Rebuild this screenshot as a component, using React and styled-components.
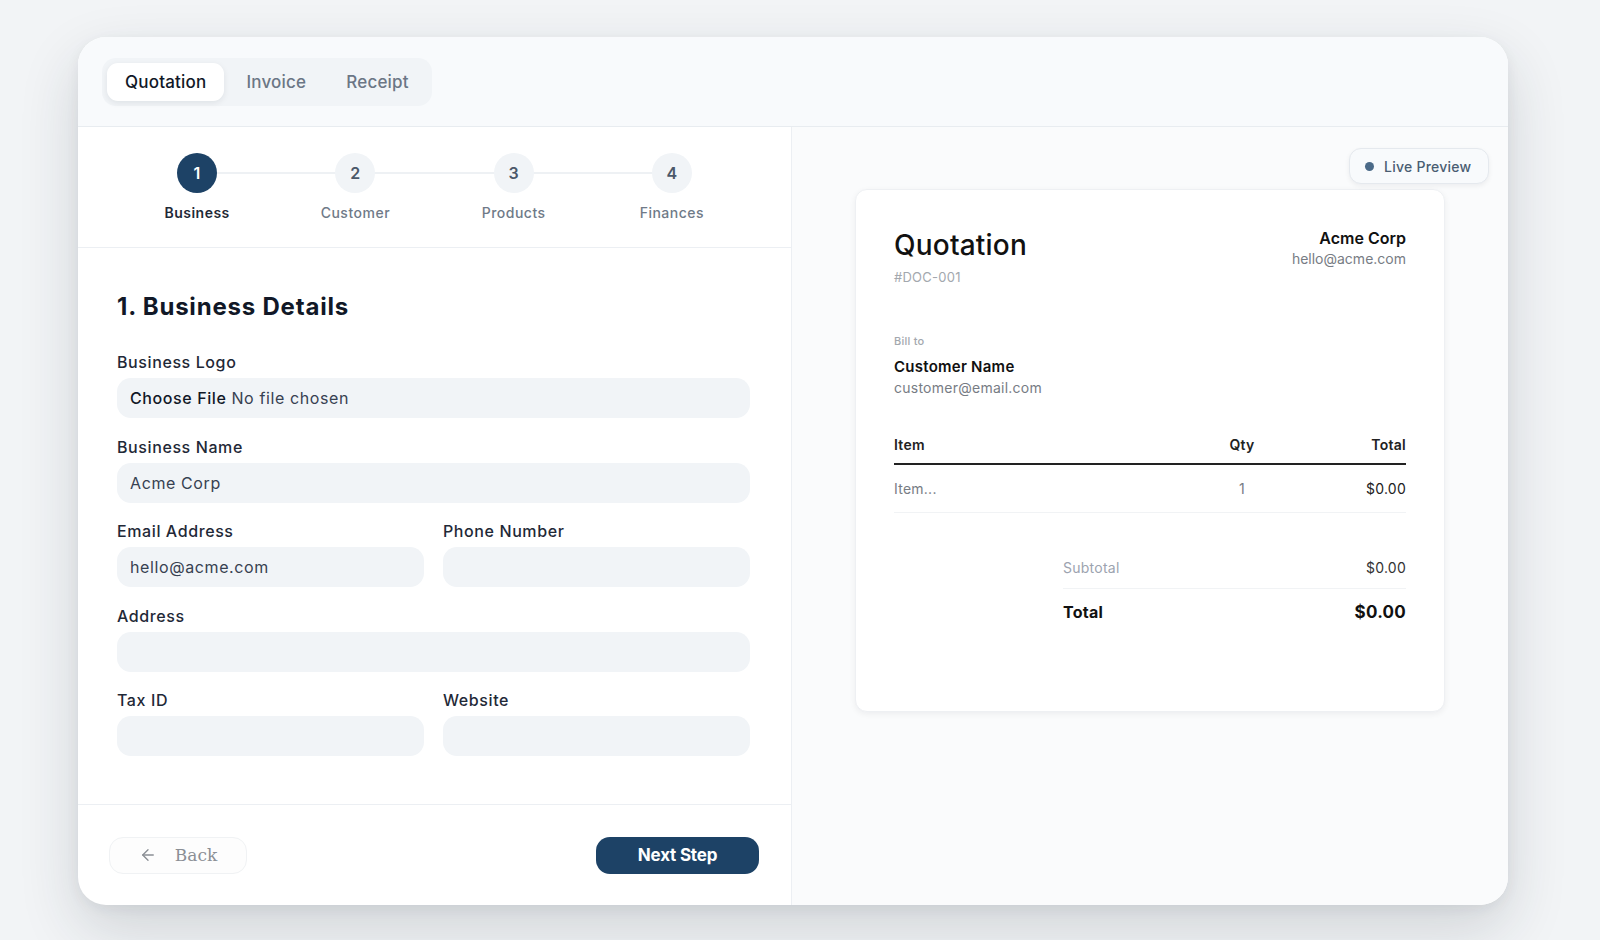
import React from "react";
import styled, { createGlobalStyle } from "styled-components";
import { ArrowLeft } from "lucide-react";

const GlobalStyle = createGlobalStyle`
    * { box-sizing: border-box; }
    body {
        margin: 0;
        background: #f2f4f6;
        font-family: Inter, "Noto Sans", sans-serif;
        letter-spacing: 0.25px;
        color: #111827;
    }
`;

const Page = styled.div`
    min-height: 940px;
    padding: 37px 0 0 78px;
`;

const Card = styled.div`
    width: 1430px;
    height: 868px;
    background: #fff;
    border-radius: 28px;
    box-shadow: 0 24px 60px rgba(30, 41, 59, 0.16), 0 4px 14px rgba(30, 41, 59, 0.06);
    display: flex;
    flex-direction: column;
    overflow: hidden;
`;

const Header = styled.div`
    height: 90px;
    flex-shrink: 0;
    background: #f8fafc;
    border-bottom: 1px solid #e8ecf0;
    display: flex;
    align-items: center;
    padding: 0 24px;
`;

const Tabs = styled.div`
    display: flex;
    gap: 4px;
    padding: 5px;
    background: #f1f4f7;
    border-radius: 14px;
`;

const Tab = styled.button`
    height: 38px;
    padding: 0 18px;
    border: none;
    border-radius: 11px;
    font-family: inherit;
    font-size: 17px;
    font-weight: 500;
    letter-spacing: 0.2px;
    cursor: pointer;
    background: ${(p) => (p.$active ? "#fff" : "transparent")};
    color: ${(p) => (p.$active ? "#111827" : "#6b7685")};
    box-shadow: ${(p) => (p.$active ? "0 2px 6px rgba(15, 23, 42, 0.08)" : "none")};
`;

const Body = styled.div`
    flex: 1;
    display: flex;
    min-height: 0;
`;

const LeftPanel = styled.div`
    width: 714px;
    flex-shrink: 0;
    border-right: 1px solid #eceff3;
    display: flex;
    flex-direction: column;
`;

const Stepper = styled.div`
    display: grid;
    grid-template-columns: repeat(4, 1fr);
    padding: 26px 40px 0;
    height: 121px;
    border-bottom: 1px solid #eceff3;
`;

const Step = styled.div`
    position: relative;
    display: flex;
    flex-direction: column;
    align-items: center;
    gap: 11px;
    &:not(:first-child)::before {
        content: "";
        position: absolute;
        top: 19px;
        left: -50%;
        right: 50%;
        height: 2px;
        background: #eef1f4;
    }
`;

const StepCircle = styled.div`
    position: relative;
    z-index: 1;
    width: 40px;
    height: 40px;
    border-radius: 50%;
    display: flex;
    align-items: center;
    justify-content: center;
    font-size: 16px;
    font-weight: 600;
    background: ${(p) => (p.$active ? "#1d4266" : "#f1f4f7")};
    color: ${(p) => (p.$active ? "#fff" : "#4b5869")};
`;

const StepLabel = styled.div`
    font-size: 14px;
    letter-spacing: 0.5px;
    font-weight: ${(p) => (p.$active ? 600 : 500)};
    color: ${(p) => (p.$active ? "#1f2937" : "#6f7a88")};
`;

const Form = styled.div`
    flex: 1;
    padding: 43px 41px 0 39px;
`;

const Heading = styled.h2`
    margin: 0 0 29px;
    font-size: 24px;
    line-height: 32px;
    font-weight: 700;
    letter-spacing: 0.8px;
    color: #111827;
`;

const Fields = styled.div`
    display: grid;
    grid-template-columns: 1fr 1fr;
    column-gap: 19px;
    row-gap: 18.5px;
`;

const Field = styled.div`
    grid-column: ${(p) => (p.$wide ? "1 / -1" : "auto")};
    display: flex;
    flex-direction: column;
    gap: 6px;
`;

const Label = styled.label`
    font-size: 16px;
    line-height: 20px;
    font-weight: 500;
    letter-spacing: 0.6px;
    color: #1f2937;
`;

const Input = styled.input`
    height: 40px;
    border: none;
    outline: none;
    border-radius: 14px;
    background: #f1f4f7;
    padding: 0 13px;
    font-family: inherit;
    font-size: 16px;
    letter-spacing: 0.6px;
    color: #374151;
`;

const FileBox = styled.div`
    height: 40px;
    border-radius: 14px;
    background: #f1f4f7;
    padding: 0 13px;
    display: flex;
    align-items: center;
    gap: 5px;
    font-size: 16px;
    letter-spacing: 0.6px;
    color: #374151;
    span {
        color: #111827;
        font-weight: 500;
    }
`;

const Footer = styled.div`
    height: 101px;
    flex-shrink: 0;
    border-top: 1px solid #eceff3;
    display: flex;
    align-items: center;
    justify-content: space-between;
    padding: 0 32px 0 31px;
`;

const BackButton = styled.button`
    width: 138px;
    height: 37px;
    display: flex;
    align-items: center;
    justify-content: center;
    gap: 18px;
    border: 1px solid #f0f2f4;
    border-radius: 14px;
    background: #fdfdfd;
    color: #8b8f95;
    font-family: "DejaVu Serif", serif;
    font-size: 17px;
    letter-spacing: 0;
`;

const NextButton = styled.button`
    width: 163px;
    height: 37px;
    border: none;
    border-radius: 14px;
    background: #1d4266;
    color: #fff;
    font-family: inherit;
    font-size: 17px;
    font-weight: 700;
    letter-spacing: -0.2px;
`;

const RightPanel = styled.div`
    position: relative;
    flex: 1;
    background: #fafbfc;
    padding: 62px 0 0;
    display: flex;
    justify-content: center;
    align-items: flex-start;
`;

const LiveBadge = styled.div`
    position: absolute;
    top: 21px;
    right: 19px;
    height: 36px;
    width: 140px;
    display: flex;
    align-items: center;
    gap: 10px;
    padding: 0 15px;
    border: 1px solid #e5e9ee;
    border-radius: 12px;
    background: #f8fafc;
    box-shadow: 0 2px 5px rgba(15, 23, 42, 0.06);
    font-size: 14px;
    font-weight: 500;
    color: #4a5d72;
`;

const Dot = styled.span`
    width: 9px;
    height: 9px;
    border-radius: 50%;
    background: #4b6a88;
`;

const Doc = styled.div`
    width: 590px;
    height: 523px;
    background: #fff;
    border: 1px solid #eef0f3;
    border-radius: 12px;
    box-shadow: 0 2px 6px rgba(15, 23, 42, 0.06);
    padding: 38px;
`;

const DocTop = styled.div`
    display: flex;
    justify-content: space-between;
    align-items: flex-start;
`;

const DocTitle = styled.div`
    font-size: 28px;
    line-height: 34px;
    font-weight: 500;
    letter-spacing: 0.2px;
    color: #111;
`;

const DocNumber = styled.div`
    margin-top: 7px;
    font-size: 13px;
    line-height: 16px;
    color: #a3a8ae;
`;

const Company = styled.div`
    text-align: right;
    display: flex;
    flex-direction: column;
    gap: 2px;
    letter-spacing: 0;
`;

const Strong = styled.div`
    font-size: ${(p) => p.$size || 16}px;
    line-height: 20px;
    font-weight: 600;
    color: #111;
`;

const Muted = styled.div`
    font-size: 14px;
    line-height: 18px;
    color: #777c84;
`;

const BillTo = styled.div`
    margin-top: 49px;
    display: flex;
    flex-direction: column;
    gap: 2px;
`;

const SmallLabel = styled.div`
    font-size: 11px;
    line-height: 14px;
    font-weight: 500;
    color: #a3a8ae;
    margin-bottom: 7px;
`;

const Table = styled.div`
    margin-top: 38px;
`;

const Row = styled.div`
    display: grid;
    grid-template-columns: 308px 80px 1fr;
    padding: ${(p) => (p.$head ? "0 0 8px" : "14px 0 13px")};
    border-bottom: ${(p) => (p.$head ? "2px solid #222" : "1px solid #f1f3f5")};
    font-size: 14px;
    line-height: 20px;
    font-weight: ${(p) => (p.$head ? 600 : 400)};
    color: ${(p) => (p.$head ? "#222" : "#777c84")};
`;

const Cell = styled.div`
    text-align: ${(p) => p.$align || "left"};
    color: ${(p) => p.$color || "inherit"};
`;

const Totals = styled.div`
    width: 343px;
    margin: 35px 0 0 auto;
`;

const TotalRow = styled.div`
    display: flex;
    justify-content: space-between;
    padding: ${(p) => (p.$grand ? "13px 0" : "10px 0")};
    border-bottom: ${(p) => (p.$grand ? "none" : "1px solid #f1f3f5")};
    font-size: ${(p) => (p.$grand ? 16 : 14)}px;
    line-height: 20px;
    font-weight: ${(p) => (p.$grand ? 700 : 400)};
    color: ${(p) => (p.$grand ? "#111" : "#9ca3af")};
    b {
        font-weight: ${(p) => (p.$grand ? 700 : 400)};
        font-size: ${(p) => (p.$grand ? 17 : 14)}px;
        color: ${(p) => (p.$grand ? "#111" : "#333")};
    }
`;

const steps = ["Business", "Customer", "Products", "Finances"];

export default function App() {
    return (
        <>
            <GlobalStyle />
            <Page>
                <Card>
                    <Header>
                        <Tabs>
                            <Tab $active>Quotation</Tab>
                            <Tab>Invoice</Tab>
                            <Tab>Receipt</Tab>
                        </Tabs>
                    </Header>
                    <Body>
                        <LeftPanel>
                            <Stepper>
                                {steps.map((s, i) => (
                                    <Step key={s}>
                                        <StepCircle $active={i === 0}>{i + 1}</StepCircle>
                                        <StepLabel $active={i === 0}>{s}</StepLabel>
                                    </Step>
                                ))}
                            </Stepper>
                            <Form>
                                <Heading>1. Business Details</Heading>
                                <Fields>
                                    <Field $wide>
                                        <Label>Business Logo</Label>
                                        <FileBox><span>Choose File</span>No file chosen</FileBox>
                                    </Field>
                                    <Field $wide>
                                        <Label>Business Name</Label>
                                        <Input defaultValue="Acme Corp" />
                                    </Field>
                                    <Field>
                                        <Label>Email Address</Label>
                                        <Input defaultValue="hello@acme.com" />
                                    </Field>
                                    <Field>
                                        <Label>Phone Number</Label>
                                        <Input />
                                    </Field>
                                    <Field $wide>
                                        <Label>Address</Label>
                                        <Input />
                                    </Field>
                                    <Field>
                                        <Label>Tax ID</Label>
                                        <Input />
                                    </Field>
                                    <Field>
                                        <Label>Website</Label>
                                        <Input />
                                    </Field>
                                </Fields>
                            </Form>
                            <Footer>
                                <BackButton>
                                    <ArrowLeft size={18} strokeWidth={1.8} />
                                    Back
                                </BackButton>
                                <NextButton>Next Step</NextButton>
                            </Footer>
                        </LeftPanel>
                        <RightPanel>
                            <LiveBadge><Dot />Live Preview</LiveBadge>
                            <Doc>
                                <DocTop>
                                    <div>
                                        <DocTitle>Quotation</DocTitle>
                                        <DocNumber>#DOC-001</DocNumber>
                                    </div>
                                    <Company>
                                        <Strong>Acme Corp</Strong>
                                        <Muted>hello@acme.com</Muted>
                                    </Company>
                                </DocTop>
                                <BillTo>
                                    <SmallLabel>Bill to</SmallLabel>
                                    <Strong $size={15}>Customer Name</Strong>
                                    <Muted>customer@email.com</Muted>
                                </BillTo>
                                <Table>
                                    <Row $head>
                                        <Cell>Item</Cell>
                                        <Cell $align="center">Qty</Cell>
                                        <Cell $align="right">Total</Cell>
                                    </Row>
                                    <Row>
                                        <Cell>Item...</Cell>
                                        <Cell $align="center">1</Cell>
                                        <Cell $align="right" $color="#222">$0.00</Cell>
                                    </Row>
                                </Table>
                                <Totals>
                                    <TotalRow>Subtotal<b>$0.00</b></TotalRow>
                                    <TotalRow $grand>Total<b>$0.00</b></TotalRow>
                                </Totals>
                            </Doc>
                        </RightPanel>
                    </Body>
                </Card>
            </Page>
        </>
    );
}
